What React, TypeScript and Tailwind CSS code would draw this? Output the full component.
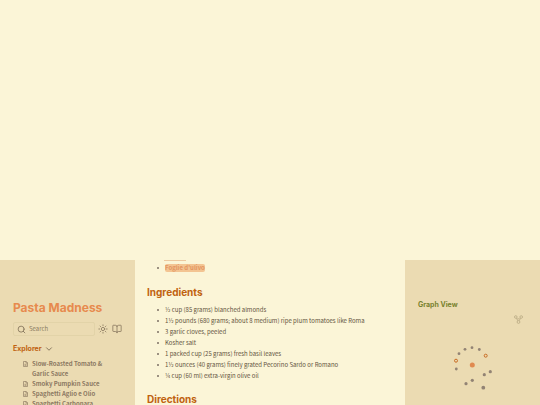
import React from 'react';
import { BookOpen, ChevronDown, Search, Sun } from 'lucide-react';

const pages = [
  'Slow-Roasted Tomato & Garlic Sauce',
  'Smoky Pumpkin Sauce',
  'Spaghetti Aglio e Olio',
  'Spaghetti Carbonara',
];

const ingredients = [
  '½ cup (85 grams) blanched almonds',
  '1½ pounds (680 grams; about 8 medium) ripe plum tomatoes like Roma',
  '3 garlic cloves, peeled',
  'Kosher salt',
  '1 packed cup (25 grams) fresh basil leaves',
  '1½ ounces (40 grams) finely grated Pecorino Sardo or Romano',
  '¼ cup (60 ml) extra-virgin olive oil',
];

// x, y, radius
const nodes = [
  [19, 20.7, 1.4],
  [25, 16.3, 1.4],
  [32, 14.7, 1.4],
  [39.3, 16.5, 1.4],
  [16.3, 36, 1.4],
  [50.3, 38.7, 1.6],
  [44.3, 41.7, 1.6],
  [32.3, 47.3, 1.6],
  [26, 50.7, 1.6],
  [43.3, 54.7, 1.9],
];

const FileIcon: React.FC = () => (
  <svg className="mt-[2px] h-[6px] w-[5px] shrink-0" viewBox="0 0 10 12" fill="none" stroke="currentColor" strokeWidth="1.3">
    <path d="M1 1h5.5L9 3.5V11H1zM6 1v3h3M3 6.5h4M3 8.7h4" />
  </svg>
);

const Bullet: React.FC = () => (
  <span className="mt-[5px] mr-[6px] size-[2px] shrink-0 rounded-full bg-[#7c6f64]" />
);

const LeftSidebar: React.FC = () => (
  <aside className="overflow-hidden bg-[#ebdbb2] pt-[39px] pr-[13px] pl-[13px]">
    <h2 className="font-['Inter','Liberation_Sans',sans-serif] text-[12px] leading-[18px] font-bold text-[#e78a4e]">
      <a href="#home">Pasta Madness</a>
    </h2>
    <div className="mt-[5px] flex items-center">
      <label className="flex h-[14px] min-w-0 flex-1 items-center gap-[3px] rounded-[2px] border border-[#e2d3a8] pl-[3px]">
        <Search className="size-[9px] shrink-0 text-[#75654f]" strokeWidth={2} />
        <input
          type="text"
          aria-label="Search"
          placeholder="Search"
          className="w-full min-w-0 bg-transparent text-[6px] leading-[10px] outline-none placeholder:text-[#8c7b62]"
        />
      </label>
      <button type="button" aria-label="Dark mode" className="ml-[3px] text-[#8b7b62]">
        <Sun className="size-[10px]" strokeWidth={2} />
      </button>
      <button type="button" aria-label="Reader mode" className="ml-[4px] text-[#8b7b62]">
        <BookOpen className="size-[10px]" strokeWidth={2} />
      </button>
    </div>
    <button type="button" className="mt-[7px] flex items-center gap-[2px] text-[#c0620f]">
      <span className="font-['Inter','Liberation_Sans',sans-serif] text-[7px] leading-[12px] font-bold">Explorer</span>
      <ChevronDown className="size-[10px] text-[#75654f]" strokeWidth={2} />
    </button>
    <ul className="mt-[4px] pr-[10px] pl-[10px] text-[6px] leading-[10px] font-bold text-[#8b7962]">
      {pages.map((page) => (
        <li key={page} className="flex gap-[4px]">
          <FileIcon />
          <a href="#page">{page}</a>
        </li>
      ))}
    </ul>
  </aside>
);

const RightSidebar: React.FC = () => (
  <aside className="overflow-hidden bg-[#ebdbb2] pt-[39px] pr-[14px] pl-[13px]">
    <h3 className="font-['Inter','Liberation_Sans',sans-serif] text-[7px] leading-[12px] font-bold text-[#79822e]">Graph View</h3>
    <div className="flex justify-end pt-[4px] pr-[3px]">
      <button type="button" aria-label="Global graph" className="text-[#b9a983]">
        <svg className="size-[9px]" viewBox="0 0 9 9" fill="none" stroke="currentColor" strokeWidth="0.8">
          <circle cx="1.8" cy="2" r="1.3" />
          <circle cx="7.2" cy="2" r="1.3" />
          <circle cx="4.5" cy="7" r="1.4" />
          <path d="M2.4 3.2 3.8 5.8M6.6 3.2 5.2 5.8M3.2 3.8h2.6" />
        </svg>
      </button>
    </div>
    <svg className="mx-auto mt-[9px] h-[64px] w-[64px]" viewBox="0 0 64 64">
      {nodes.map(([x, y, r]) => (
        <circle key={`${x}-${y}`} cx={x} cy={y} r={r} fill="#928374" />
      ))}
      <circle cx="16" cy="27.7" r="1.5" fill="none" stroke="#c96c24" />
      <circle cx="45.7" cy="22.7" r="1.5" fill="none" stroke="#c96c24" />
      <circle cx="32.3" cy="32" r="2.5" fill="#e08a50" />
    </svg>
  </aside>
);

const App: React.FC = () => (
  <div className="flex h-screen flex-col overflow-hidden bg-[#fbf5d7] font-['Noto_Sans_CJK_SC','Open_Sans',sans-serif]">
    <header className="h-[260px] shrink-0" />
    <div className="grid min-h-0 flex-1 grid-cols-[1fr_2fr_1fr]">
      <LeftSidebar />
      <main className="overflow-hidden px-3 text-[6px] text-[#635440]">
        <div className="ml-[17px] h-px w-[22px] bg-[#ecc9a0]" />
        <ul className="mt-px pl-[10px] leading-[12px]">
          <li className="flex">
            <Bullet />
            <a href="#foglie" className="my-[2px] rounded-[2px] bg-[#f3c492] leading-[8px] font-bold text-[#e39560]">Foglie d'ulivo</a>
          </li>
        </ul>
        <h2 className="mt-[11px] font-['Inter','Liberation_Sans',sans-serif] text-[10px] leading-[14px] font-bold text-[#c0620f]">Ingredients</h2>
        <ul className="mt-[5px] pl-[10px] leading-[11px]">
          {ingredients.map((item) => (
            <li key={item} className="flex">
              <Bullet />
              {item}
            </li>
          ))}
        </ul>
        <h2 className="mt-[11px] font-['Inter','Liberation_Sans',sans-serif] text-[10px] leading-[14px] font-bold text-[#c0620f]">Directions</h2>
      </main>
      <RightSidebar />
    </div>
  </div>
);

export default App;
